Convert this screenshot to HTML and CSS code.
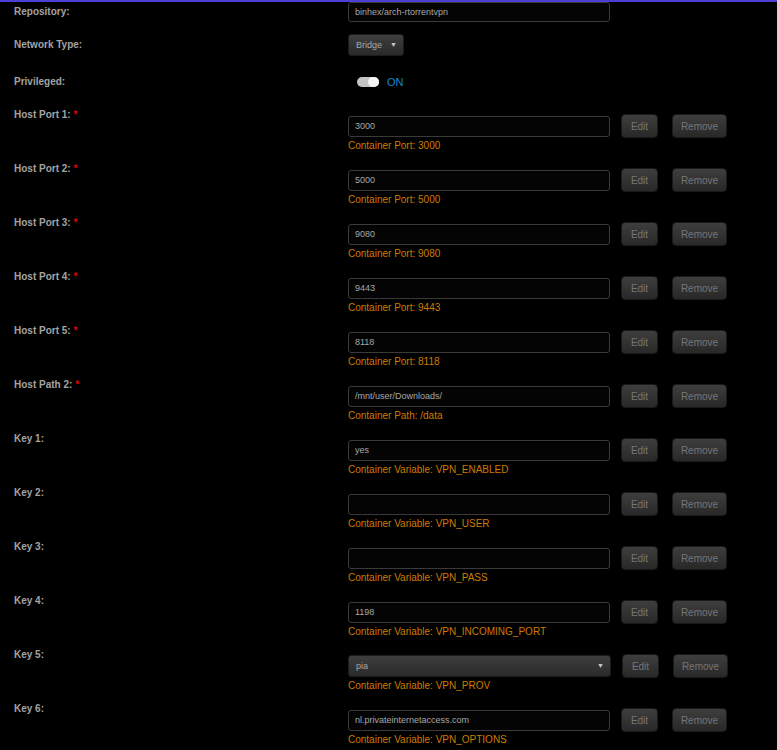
FILE: index.html
```html
<!DOCTYPE html>
<html>
<head>
    <title>Container Settings</title>
    <link rel="stylesheet" href="styles.css">
</head>
<body>

    <form class="settings">
        <div class="row row-repo">
            <label class="label">Repository:</label>
            <div class="control">
                <input class="text" type="text" value="binhex/arch-rtorrentvpn">
            </div>
        </div>

        <div class="row row-net">
            <label class="label">Network Type:</label>
            <div class="control">
                <div class="select select-small">Bridge<span class="arrow">&#9660;</span></div>
            </div>
        </div>

        <div class="row row-priv">
            <label class="label">Privileged:</label>
            <div class="control">
                <span class="switch"><span class="knob"></span></span>
                <span class="switch-text">ON</span>
            </div>
        </div>

        <div class="row field">
            <label class="label">Host Port 1: <span class="req">*</span></label>
            <div class="control">
                <div class="line">
                    <input class="text" type="text" value="3000">
                    <button type="button" class="btn btn-edit">Edit</button>
                    <button type="button" class="btn btn-remove">Remove</button>
                </div>
                <div class="hint">Container Port: 3000</div>
            </div>
        </div>

        <div class="row field">
            <label class="label">Host Port 2: <span class="req">*</span></label>
            <div class="control">
                <div class="line">
                    <input class="text" type="text" value="5000">
                    <button type="button" class="btn btn-edit">Edit</button>
                    <button type="button" class="btn btn-remove">Remove</button>
                </div>
                <div class="hint">Container Port: 5000</div>
            </div>
        </div>

        <div class="row field">
            <label class="label">Host Port 3: <span class="req">*</span></label>
            <div class="control">
                <div class="line">
                    <input class="text" type="text" value="9080">
                    <button type="button" class="btn btn-edit">Edit</button>
                    <button type="button" class="btn btn-remove">Remove</button>
                </div>
                <div class="hint">Container Port: 9080</div>
            </div>
        </div>

        <div class="row field">
            <label class="label">Host Port 4: <span class="req">*</span></label>
            <div class="control">
                <div class="line">
                    <input class="text" type="text" value="9443">
                    <button type="button" class="btn btn-edit">Edit</button>
                    <button type="button" class="btn btn-remove">Remove</button>
                </div>
                <div class="hint">Container Port: 9443</div>
            </div>
        </div>

        <div class="row field">
            <label class="label">Host Port 5: <span class="req">*</span></label>
            <div class="control">
                <div class="line">
                    <input class="text" type="text" value="8118">
                    <button type="button" class="btn btn-edit">Edit</button>
                    <button type="button" class="btn btn-remove">Remove</button>
                </div>
                <div class="hint">Container Port: 8118</div>
            </div>
        </div>

        <div class="row field">
            <label class="label">Host Path 2: <span class="req">*</span></label>
            <div class="control">
                <div class="line">
                    <input class="text" type="text" value="/mnt/user/Downloads/">
                    <button type="button" class="btn btn-edit">Edit</button>
                    <button type="button" class="btn btn-remove">Remove</button>
                </div>
                <div class="hint">Container Path: /data</div>
            </div>
        </div>

        <div class="row field">
            <label class="label">Key 1:</label>
            <div class="control">
                <div class="line">
                    <input class="text" type="text" value="yes">
                    <button type="button" class="btn btn-edit">Edit</button>
                    <button type="button" class="btn btn-remove">Remove</button>
                </div>
                <div class="hint">Container Variable: VPN_ENABLED</div>
            </div>
        </div>

        <div class="row field">
            <label class="label">Key 2:</label>
            <div class="control">
                <div class="line">
                    <input class="text" type="text" value="">
                    <button type="button" class="btn btn-edit">Edit</button>
                    <button type="button" class="btn btn-remove">Remove</button>
                </div>
                <div class="hint">Container Variable: VPN_USER</div>
            </div>
        </div>

        <div class="row field">
            <label class="label">Key 3:</label>
            <div class="control">
                <div class="line">
                    <input class="text" type="text" value="">
                    <button type="button" class="btn btn-edit">Edit</button>
                    <button type="button" class="btn btn-remove">Remove</button>
                </div>
                <div class="hint">Container Variable: VPN_PASS</div>
            </div>
        </div>

        <div class="row field">
            <label class="label">Key 4:</label>
            <div class="control">
                <div class="line">
                    <input class="text" type="text" value="1198">
                    <button type="button" class="btn btn-edit">Edit</button>
                    <button type="button" class="btn btn-remove">Remove</button>
                </div>
                <div class="hint">Container Variable: VPN_INCOMING_PORT</div>
            </div>
        </div>

        <div class="row field">
            <label class="label">Key 5:</label>
            <div class="control">
                <div class="line">
                    <div class="select select-wide">pia<span class="arrow">&#9660;</span></div>
                    <button type="button" class="btn btn-edit">Edit</button>
                    <button type="button" class="btn btn-remove">Remove</button>
                </div>
                <div class="hint">Container Variable: VPN_PROV</div>
            </div>
        </div>

        <div class="row field">
            <label class="label">Key 6:</label>
            <div class="control">
                <div class="line">
                    <input class="text" type="text" value="nl.privateinternetaccess.com">
                    <button type="button" class="btn btn-edit">Edit</button>
                    <button type="button" class="btn btn-remove">Remove</button>
                </div>
                <div class="hint">Container Variable: VPN_OPTIONS</div>
            </div>
        </div>
    </form>

</body>
</html>
```

FILE: styles.css
```css
html, body {
    background-color: #000;
}

body {
    margin: 0;
    border-top: 2px solid #4b3fd6;
    font-family: "Liberation Sans", Arial, sans-serif;
    font-size: 10px;
    overflow: hidden;
}

.settings {
    margin: 0;
}

.row {
    display: grid;
    grid-template-columns: 348px 1fr;
}

.label {
    padding-left: 14px;
    font-weight: bold;
    font-size: 10px;
    line-height: 12px;
    color: #a3a3a3;
}

.req {
    color: #e00000;
}

.control {
    display: flex;
    flex-direction: column;
}

/* top rows */
.row-repo,
.row-net,
.row-priv {
    align-items: center;
}

.row-repo {
    height: 20px;
}

.row-net {
    margin-top: 12px;
    height: 22px;
}

.row-priv {
    margin-top: 20px;
    height: 12px;
}

.row-priv .control {
    flex-direction: row;
    align-items: center;
}

.row-repo .text {
    height: 20px;
}

/* port / path / variable rows */
.field {
    margin-top: 0;
    height: 54px;
    align-items: start;
}

.row-priv + .field {
    margin-top: 21px;
}

.line {
    display: flex;
    align-items: center;
    height: 24px;
    margin-top: 5px;
}

.hint {
    margin-top: 2px;
    font-size: 10px;
    line-height: 12px;
    color: #cc7c00;
}

.text {
    box-sizing: border-box;
    width: 262px;
    height: 21px;
    margin: 0;
    padding: 0 6px;
    border: 1px solid #3a3a3a;
    border-radius: 3px;
    background-color: #040404;
    box-shadow: inset 0 1px 2px rgba(0, 0, 0, 0.8);
    color: #a8a8a8;
    font-family: "Liberation Sans", Arial, sans-serif;
    font-size: 9px;
    outline: none;
}

.select {
    box-sizing: border-box;
    position: relative;
    height: 22px;
    padding-left: 7px;
    border: 1px solid #1c1c1c;
    border-radius: 3px;
    background: linear-gradient(#3e3e3e, #2a2a2a);
    color: #a8a8a8;
    font-size: 9px;
    line-height: 20px;
}

.select-small {
    width: 56px;
}

.select-wide {
    width: 263px;
}

.select .arrow {
    position: absolute;
    right: 6px;
    top: 0;
    font-size: 7px;
    color: #c8c8c8;
}

.switch {
    position: relative;
    box-sizing: border-box;
    width: 22px;
    height: 10px;
    margin-left: 9px;
    border-radius: 5px;
    background-color: #c4c4c4;
}

.switch .knob {
    position: absolute;
    right: 0;
    top: 0;
    width: 11px;
    height: 10px;
    border-radius: 5px;
    background-color: #f4f4f4;
}

.switch-text {
    margin-left: 8px;
    font-size: 11px;
    line-height: 12px;
    color: #0f88d4;
}

.btn {
    box-sizing: border-box;
    height: 24px;
    margin: 0;
    padding: 0;
    border: 1px solid #1a1a1a;
    border-radius: 4px;
    background: linear-gradient(#3e3e3e, #282828);
    color: #767676;
    font-family: "Liberation Sans", Arial, sans-serif;
    font-size: 10px;
}

.btn-edit {
    width: 37px;
    margin-left: 11px;
}

.btn-remove {
    width: 55px;
    margin-left: 14px;
}
```
